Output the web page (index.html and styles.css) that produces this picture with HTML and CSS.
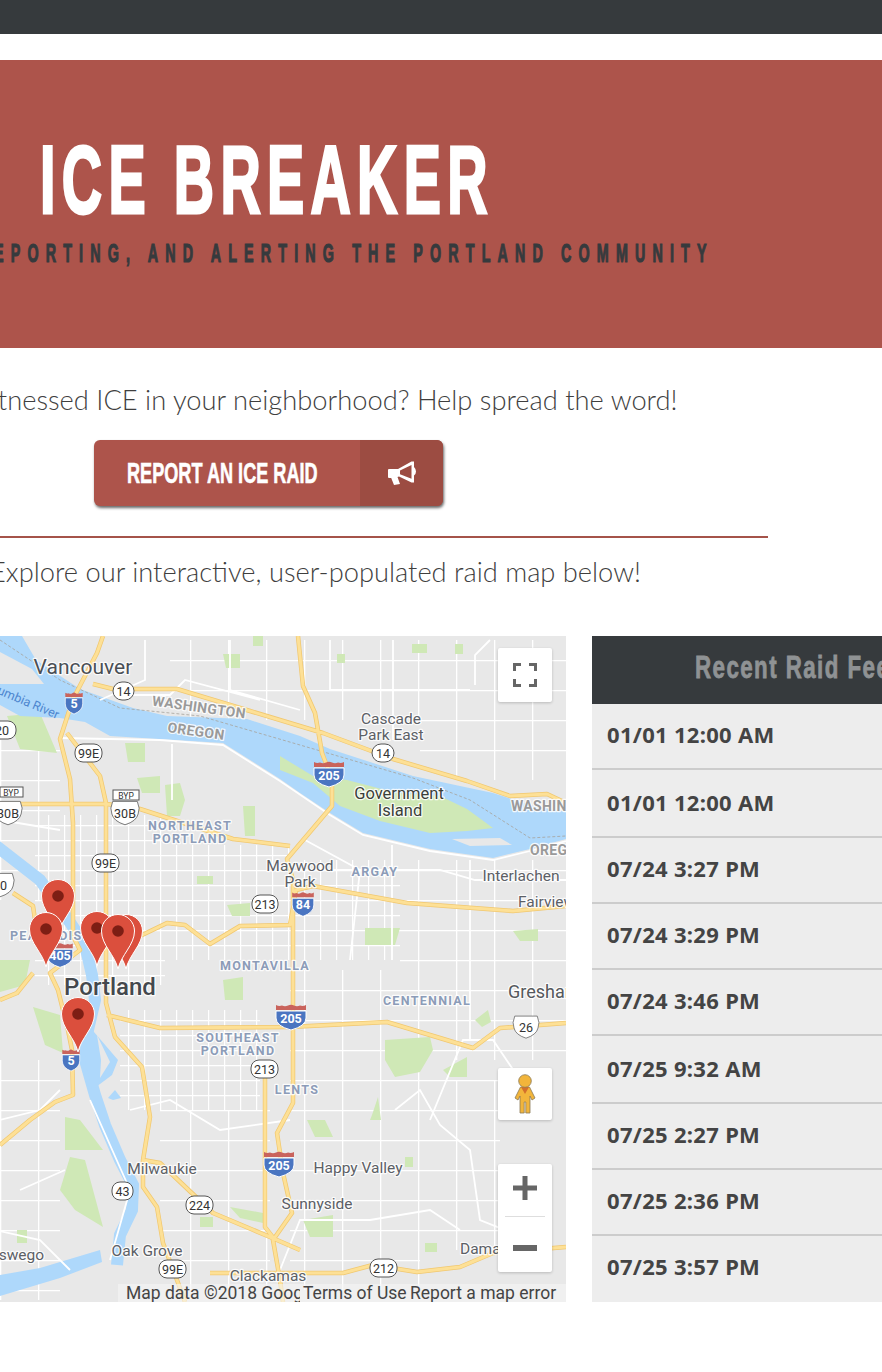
FILE: index.html
```html
<!DOCTYPE html>
<html>
<head>
    <title>Ice Breaker</title>
    <link rel="stylesheet" href="styles.css">
</head>
<body>
    <div class="topbar"></div>

    <header class="hero">
        <h1 class="hero-title"><span>ICE BREAKER</span></h1>
        <div class="hero-sub"><span>TRACKING, REPORTING, AND ALERTING THE PORTLAND COMMUNITY</span></div>
    </header>

    <p class="lede lede-first">Witnessed ICE in your neighborhood? Help spread the word!</p>

    <a class="report" href="#">
        <span class="report-label"><span>REPORT AN ICE RAID</span></span>
        <span class="report-icon">
            <svg width="30" height="26" viewBox="0 0 30 26">
                <path fill="#fff" fill-rule="evenodd" d="M1 10Q1 9 2 9L11 9 24.5 1.5 27 1.5 27 7Q29 9 29 11.5 29 14 27 15.5L27 22.5 24.5 22.5 12 16.5 10.5 17 13 24 7 25 4.2 18 2 18Q1 18 1 17ZM13 10.5L24.5 5 24.5 18.8 13 14.3Z"/>
            </svg>
        </span>
    </a>

    <hr class="rule">

    <p class="lede lede-second">Explore our interactive, user-populated raid map below!</p>

    <section class="dash">
        <div class="map">
            <svg class="map-art" width="566" height="666" viewBox="0 636 566 666">
                <defs>
                    <pattern id="blocks" width="16" height="15" patternUnits="userSpaceOnUse">
                        <path d="M0 .5H16M.5 0V15" stroke="#fff" stroke-width="1.4" fill="none"/>
                    </pattern>
                    <pattern id="bigblocks" width="38" height="30" patternUnits="userSpaceOnUse">
                        <path d="M0 .5H38M.5 0V30" stroke="#fff" stroke-width="1.6" fill="none"/>
                    </pattern>
                    <g id="pin">
                        <path d="M0 38C-3 24-16.500 14-16.500 0A16.500 16.500 0 0 1 16.500 0C16.500 14 3 24 0 38Z" fill="#db4f3d" stroke="#fff" stroke-width="1"/>
                        <circle r="5.800" fill="#7d1e14"/>
                    </g>
                    <g id="ishield">
                        <path d="M-15 -6H15V1Q15 9 0 13Q-15 9 -15 1Z" fill="#4a75c1" stroke="#fff" stroke-width="1"/>
                        <path d="M-15 -7V-12Q-12 -10.500 -9 -11.500Q-6 -10 -3 -11.500Q0 -13 3 -11.500Q6 -10 9 -11.500Q12 -10.500 15 -12V-7Z" fill="#c9635c"/>
                    </g>
                    <g id="ushield">
                        <path d="M-15 -14H15Q19 -6 16 0Q14 8 0 12Q-14 8 -16 0Q-19 -6 -15 -14Z" fill="#fff" stroke="#666" stroke-width="1"/>
                    </g>
                    <path id="hwys" d="M103 636L97 653 73 699 60 739 70 779 73 823V936L80 950 50 973 58 990 68 1030 72 1050 73 1095 55 1102 30 1120 0 1145M67 733L100 776 106 803V1003L115 1037 142 1067 150 1117 143 1160V1187L157 1207 163 1243 177 1280 185 1302M93 684L113 689H177L250 711 323 733 393 759 467 781 510 796 547 794 566 803M298 636L303 686 315 713 322 753 332 779V806L287 859 293 880V1103L277 1133 283 1173 292 1213 273 1240 280 1280 283 1302M140 936L167 923 185 925 210 944 240 926 290 925 296 890 313 886 407 903 513 911 566 906M107 1015L160 1028 290 1027 387 1022 473 1048 500 1028 566 1023M265 1063V1227L275 1240M143 1160L160 1163 213 1213 270 1237 300 1250M210 1273H343L373 1265 417 1272 460 1267 493 1253 566 1247M0 804H107L140 809 233 839 290 846M13 893L33 906 35 920M0 1000L17 993 33 973"/>
                </defs>

                <rect x="0" y="636" width="566" height="666" fill="#e8e8e8"/>

                <!-- neighbourhood street grids -->
                <path fill="url(#blocks)" d="M35 815H165V985H35ZM165 845H290V960H165ZM120 1010H260V1110H120ZM290 860H400V960H290Z"/>
                <path fill="url(#bigblocks)" d="M0 740H60V900H0ZM170 640H480V720H170ZM400 860H566V1010H400ZM160 1110H270V1290H160ZM290 1030H420V1290H290ZM0 1060H60V1300H0ZM420 640H566V780H420ZM290 970H566V1060H290ZM420 1080H500V1250H420Z"/>

                <!-- parks -->
                <path fill="#cfe8b6" d="M7 716L40 713 57 753 20 749ZM125 743H145V762H128ZM137 778L160 776V793H142ZM165 785L180 783 185 800 180 816H167ZM223 654H240V668H226ZM243 806H255V836H245ZM197 876H213V884H197ZM227 905L250 903V916H232ZM253 636H263V646H253ZM412 644H427V653H412ZM455 644H463V654H455ZM337 654H345V663H337ZM365 928H400L395 945H365ZM513 931L538 929V941H520ZM33 1007L60 1015 63 1053 45 1045ZM0 960H30L25 985 0 992ZM65 1117L80 1120 103 1150H65ZM70 1157L85 1160 103 1227 75 1210 60 1190ZM223 980L243 977V1000H225ZM230 1207L263 1213V1223L240 1218ZM200 1217H213V1227H200ZM17 1230H27V1243H17ZM385 1040L430 1037 433 1050 420 1072 395 1077 385 1060ZM443 1070L467 1057V1077H450ZM475 1020L488 1010 491 1022 482 1027ZM372 1115L378 1097 381 1120 370 1120ZM307 1120H325L333 1137H315ZM303 1220L333 1215V1237H310ZM425 1243H437V1252H425ZM405 1157H413V1167H405Z"/>

                <!-- water -->
                <path fill="#aed8fb" d="M0 636H22L36 660 80 689 133 708 167 716 247 719 300 736 330 749 413 776 493 793 533 806 566 812V839L530 849 493 858 430 849 363 833 330 813 300 793 280 779 223 743 110 736 85 722 60 718 20 716 0 705Z"/>
                <path fill="#e8e8e8" d="M0 652L32 669 44 684H0Z"/>
                <path fill="#cfe8b6" d="M280 756L313 776 347 780 397 793 440 796 467 809 493 828 467 831 430 833 380 821 340 806 313 783 280 770Z"/>
                <path fill="#e8e8e8" d="M452 839L500 838 512 845 470 846Z"/>
                <path d="M-5 845L40 880 65 915 85 945 92 975 95 1000 88 1030 85 1060 95 1095 105 1125 120 1160 133 1185 132 1210 120 1235 117 1265" fill="none" stroke="#aed8fb" stroke-width="12"/>
                <path fill="#aed8fb" d="M88 1025L118 1060 112 1075 92 1090 85 1060ZM115 1090L121 1098 113 1100 108 1098ZM0 1275L40 1268 100 1250 102 1262 60 1278 20 1290 0 1296Z"/>
                <path fill="#e8e8e8" d="M97 1035L110 1062 100 1078 101 1060Z"/>
                <path d="M0 640L60 680 120 708 200 716 300 745 413 778 470 800 530 838 566 836" fill="none" stroke="#a6a29a" stroke-width=".8" stroke-dasharray="3 2"/>

                <!-- arterials -->
                <g class="roads-minor">
                    <path d="M60 738L160 740 223 745 280 781 330 815 363 835 430 851 493 860 530 851 566 841M130 695H170L185 680 260 700M172 744V800M100 700L145 680V640M230 640V690L300 710M300 870L440 870 475 880 566 880M393 640V740M330 640V690H470M475 685V655L490 640M305 840L360 870 350 960M392 845V960M470 860V1040M0 820L60 830M90 1100L130 1190 110 1260M20 1190L65 1170M130 1110L170 1100 220 1130 290 1120M395 1110L420 1090 440 1125 470 1150 480 1220 530 1240M430 1120L463 1040 493 1040 520 1080M280 1270L300 1220 370 1220 430 1210 460 1230M0 1120L40 1110 60 1090M-5 1230L40 1240 70 1270"/>
                </g>

                <!-- highways -->
                <use href="#hwys" class="hwy-edge"/>
                <use href="#hwys" class="hwy"/>

                <!-- place names -->
                <text class="label big" x="83" y="674">Vancouver</text>
                <text class="label city" x="110" y="995">Portland</text>
                <text class="label state" transform="rotate(8 199 707)" x="199" y="712">WASHINGTON</text>
                <text class="label state" transform="rotate(8 196 731)" x="196" y="736">OREGON</text>
                <text class="label town" x="391" y="724">Cascade</text>
                <text class="label town" x="391" y="740">Park East</text>
                <text class="label island" x="399" y="799">Government</text>
                <text class="label island" x="400" y="816">Island</text>
                <text class="label hood" x="190" y="830">NORTHEAST</text>
                <text class="label hood" x="190" y="843">PORTLAND</text>
                <text class="label town" x="300" y="871">Maywood</text>
                <text class="label town" x="300" y="887">Park</text>
                <text class="label hood" x="375" y="876">ARGAY</text>
                <text class="label town" x="521" y="881">Interlachen</text>
                <text class="label town start" x="518" y="907">Fairview</text>
                <text class="label state start" x="511" y="811">WASHINGTON</text>
                <text class="label state start" x="530" y="855">OREGON</text>
                <text class="label hood start" x="10" y="940">PEARL DISTRICT</text>
                <text class="label hood" x="265" y="970">MONTAVILLA</text>
                <text class="label hood" x="427" y="1005">CENTENNIAL</text>
                <text class="label town start big-town" x="508" y="998">Gresham</text>
                <text class="label hood" x="238" y="1042">SOUTHEAST</text>
                <text class="label hood" x="238" y="1055">PORTLAND</text>
                <text class="label hood" x="297" y="1094">LENTS</text>
                <text class="label town" x="162" y="1174">Milwaukie</text>
                <text class="label town" x="358" y="1173">Happy Valley</text>
                <text class="label town" x="317" y="1209">Sunnyside</text>
                <text class="label town" x="147" y="1256">Oak Grove</text>
                <text class="label town" x="16" y="1260">Oswego</text>
                <text class="label town" x="268" y="1281">Clackamas</text>
                <text class="label town start" x="460" y="1254">Damascus</text>
                <text class="label water" transform="rotate(23 20 699)" x="20" y="703">Columbia River</text>

                <!-- route shields -->
                <g class="shields">
                    <use href="#ishield" transform="translate(74 703) scale(.58 .85)"/><text class="ilabel" x="74" y="708">5</text>
                    <use href="#ishield" transform="translate(71 1060) scale(.58 .85)"/><text class="ilabel" x="71" y="1065">5</text>
                    <use href="#ishield" transform="translate(60 955) scale(.85 .95)"/><text class="ilabel" x="60" y="960">405</text>
                    <use href="#ishield" x="329" y="774"/><text class="ilabel" x="329" y="780">205</text>
                    <use href="#ishield" x="291" y="1017"/><text class="ilabel" x="291" y="1023">205</text>
                    <use href="#ishield" x="279" y="1164"/><text class="ilabel" x="279" y="1170">205</text>
                    <use href="#ishield" transform="translate(303 904) scale(.72 .95)"/><text class="ilabel" x="303" y="909">84</text>

                    <rect class="plate" x="113" y="682" width="21" height="18" rx="9"/><text class="rlabel" x="123.500" y="695.500">14</text>
                    <rect class="plate" x="372" y="744" width="22" height="18" rx="9"/><text class="rlabel" x="383" y="757.500">14</text>
                    <rect class="plate" x="-12" y="721" width="28" height="18" rx="8"/><text class="rlabel" x="2" y="735">20</text>
                    <rect class="plate" x="75" y="744" width="27" height="18" rx="8"/><text class="rlabel" x="88.500" y="757.500">99E</text>
                    <rect class="plate" x="92" y="854" width="27" height="18" rx="8"/><text class="rlabel" x="105.500" y="867.500">99E</text>
                    <rect class="plate" x="252" y="895" width="26" height="18" rx="8"/><text class="rlabel" x="265" y="908.500">213</text>
                    <rect class="plate" x="251" y="1060" width="27" height="18" rx="8"/><text class="rlabel" x="264.500" y="1073.500">213</text>
                    <rect class="plate" x="112" y="1182" width="21" height="18" rx="8"/><text class="rlabel" x="122.500" y="1195.500">43</text>
                    <rect class="plate" x="186" y="1196" width="27" height="18" rx="8"/><text class="rlabel" x="199.500" y="1209.500">224</text>
                    <rect class="plate" x="159" y="1260" width="27" height="18" rx="8"/><text class="rlabel" x="172.500" y="1273.500">99E</text>
                    <rect class="plate" x="370" y="1259" width="27" height="18" rx="8"/><text class="rlabel" x="383.500" y="1272.500">212</text>

                    <use href="#ushield" transform="translate(526 1028) scale(.75 .85)"/><text class="rlabel" x="526" y="1032">26</text>
                    <use href="#ushield" transform="translate(125 814) scale(.82 .9)"/><text class="rlabel" x="125" y="818">30B</text>
                    <use href="#ushield" transform="translate(8 814) scale(.82 .9)"/><text class="rlabel" x="8" y="818">30B</text>
                    <use href="#ushield" transform="translate(0 886) scale(.82 .9)"/><text class="rlabel" x="0" y="890">30</text>
                    <rect class="plate byp" x="113" y="790" width="26" height="10"/><text class="bytext" x="126" y="798.500">BYP</text>
                    <rect class="plate byp" x="0" y="787" width="23" height="10"/><text class="bytext" x="11" y="795.500">BYP</text>
                </g>

                <!-- raid markers -->
                <use href="#pin" x="58" y="896"/>
                <use href="#pin" x="46" y="929"/>
                <use href="#pin" x="126" y="931"/>
                <use href="#pin" x="97" y="928"/>
                <use href="#pin" x="118" y="931"/>
                <use href="#pin" x="78" y="1014"/>
            </svg>

            <div class="map-footer">
                <span class="foot-data">Map data ©2018 Google</span>
                <span class="foot-terms">Terms of Use</span>
                <span class="foot-report">Report a map error</span>
            </div>

            <button class="ctl ctl-full">
                <svg width="24" height="24" viewBox="0 0 24 24"><path fill="none" stroke="#666" stroke-width="3" d="M1.500 8V1.500H8M16 1.500H22.500V8M22.500 16V22.500H16M8 22.500H1.500V16"/></svg>
            </button>
            <button class="ctl ctl-peg">
                <svg width="24" height="42" viewBox="0 0 24 42">
                    <path d="M7.500 14H16.500L22 25 19 27 17 23V40H12.800V29H11.200V40H7V23L5 27 2 25Z" fill="#f2b53b" stroke="#8b7a55" stroke-width=".8"/>
                    <path d="M8 14H16L12 21Z" fill="#d3702c"/>
                    <circle cx="12" cy="8" r="6.300" fill="#f2b53b" stroke="#8b7a55" stroke-width=".8"/>
                </svg>
            </button>
            <div class="ctl ctl-zoom">
                <span class="zoom-btn zoom-in"><svg width="24" height="24" viewBox="0 0 24 24"><path fill="#666" d="M9.500 0H14.500V9.500H24V14.500H14.500V24H9.500V14.500H0V9.500H9.500Z"/></svg></span>
                <span class="zoom-line"></span>
                <span class="zoom-btn zoom-out"><svg width="24" height="6" viewBox="0 0 24 6"><rect width="24" height="6" fill="#666"/></svg></span>
            </div>
        </div>

        <aside class="feed">
            <div class="feed-head"><span>Recent Raid Feed</span></div>
            <div class="feed-row">01/01 12:00 AM</div>
            <div class="feed-row feed-row-tall">01/01 12:00 AM</div>
            <div class="feed-row">07/24 3:27 PM</div>
            <div class="feed-row">07/24 3:29 PM</div>
            <div class="feed-row">07/24 3:46 PM</div>
            <div class="feed-row feed-row-tall">07/25 9:32 AM</div>
            <div class="feed-row">07/25 2:27 PM</div>
            <div class="feed-row">07/25 2:36 PM</div>
            <div class="feed-row">07/25 3:57 PM</div>
        </aside>
    </section>
</body>
</html>
```

FILE: styles.css
```css
html, body {
    margin: 0;
    padding: 0;
    overflow: hidden;
    height: 1372px;
    background: #fff;
}
body {
    font-family: Lato, "Open Sans", sans-serif;
    color: #333;
}

.topbar {
    height: 34px;
    background: #363a3d;
}

.hero {
    margin-top: 26px;
    height: 288px;
    background: #ad544b;
    overflow: hidden;
}
.hero-title {
    margin: 70px 0 0 40px;
    font: 700 97px/100px "Liberation Sans", sans-serif;
    color: #fff;
    white-space: nowrap;
}
.hero-title span {
    display: inline-block;
    letter-spacing: 11px;
    transform: scaleX(.575);
    transform-origin: left;
    -webkit-text-stroke: 3px #fff;
}
.hero-sub {
    display: flex;
    justify-content: flex-end;
    width: 714px;
    margin-top: 8px;
    font: 700 26px/30px "Liberation Sans", sans-serif;
    color: #363a3d;
    white-space: nowrap;
}
.hero-sub span {
    display: inline-block;
    flex: none;
    letter-spacing: 13px;
    transform: scaleX(.55);
    transform-origin: right;
    -webkit-text-stroke: 1.2px #363a3d;
}

.lede {
    margin: 0;
    font-size: 27.300px;
    font-weight: 300;
    line-height: 36px;
    white-space: nowrap;
    color: #3f3f3f;
}
.lede-first {
    margin: 34px 0 0 -36px;
}
.lede-second {
    margin: 16px 0 0 -10px;
}

.report {
    display: flex;
    width: 349px;
    height: 66px;
    margin: 22px 0 0 94px;
    border-radius: 6px;
    overflow: hidden;
    background: #ad544b;
    box-shadow: 1px 2px 3px rgba(0, 0, 0, .6);
    text-decoration: none;
    color: #fff;
}
.report-label {
    flex: 1;
    min-width: 0;
    padding-left: 33px;
    font: 700 29px/66px "Liberation Sans", sans-serif;
    white-space: nowrap;
}
.report-label span {
    display: inline-block;
    transform: scaleX(.625);
    transform-origin: left;
    -webkit-text-stroke: .6px #fff;
}
.report-icon {
    display: flex;
    flex: none;
    align-items: center;
    justify-content: center;
    width: 83px;
    background: #9c4c42;
}

.rule {
    width: 768px;
    height: 2px;
    margin: 30px 0 0;
    border: 0;
    background: #a5534a;
}

.dash {
    display: flex;
    gap: 26px;
    margin-top: 46px;
}
.map {
    position: relative;
    flex: none;
    width: 566px;
    height: 666px;
    overflow: hidden;
}
.map-art {
    display: block;
}
.label {
    font-family: Roboto, sans-serif;
    font-size: 15.500px;
    text-anchor: middle;
    fill: #5c6066;
    stroke: #fff;
    stroke-width: 2.500px;
    stroke-opacity: .85;
    paint-order: stroke;
    stroke-linejoin: round;
}
.label.start { text-anchor: start; }
.label.big { font-size: 21px; fill: #4a4f55; }
.label.city { font-size: 24px; font-weight: 500; fill: #44484d; }
.label.big-town { font-size: 18px; fill: #55585c; }
.label.island { font-size: 16.500px; fill: #3b3f3a; }
.label.state { font-size: 14px; font-weight: 700; fill: #9a9a9a; letter-spacing: .3px; }
.label.hood { font-size: 12.500px; font-weight: 700; fill: #8c9cb8; letter-spacing: 1.300px; }
.label.water { font-size: 12.500px; fill: #4d86cf; stroke: none; }
.roads-minor path {
    fill: none;
    stroke: #fff;
    stroke-width: 1.800;
}
.hwy-edge {
    fill: none;
    stroke: #f1c870;
    stroke-width: 4.500;
    stroke-linejoin: round;
}
.hwy {
    fill: none;
    stroke: #fde096;
    stroke-width: 3;
    stroke-linejoin: round;
}
.plate {
    fill: #fff;
    stroke: #555;
    stroke-width: 1;
}
.rlabel, .ilabel, .bytext {
    font-family: Roboto, sans-serif;
    text-anchor: middle;
}
.rlabel { font-size: 12.500px; fill: #333; }
.ilabel { font-size: 12.500px; font-weight: 700; fill: #fff; }
.bytext { font-size: 8.500px; fill: #333; }

.map-footer {
    position: absolute;
    left: 118px;
    right: 0;
    bottom: 0;
    height: 18px;
    background: rgba(245, 245, 245, .6);
    font: 17.500px/18px Roboto, sans-serif;
    color: #444;
    white-space: nowrap;
}
.map-footer span {
    position: absolute;
    top: 0;
}
.foot-data { left: 8px; width: 174px; overflow: hidden; }
.foot-terms { left: 185px; }
.foot-report { left: 292px; }

.ctl {
    position: absolute;
    left: 498px;
    width: 54px;
    padding: 0;
    border: 0;
    border-radius: 2px;
    background: #fff;
    box-shadow: 0 1px 3px rgba(0, 0, 0, .2);
    display: flex;
    align-items: center;
    justify-content: center;
}
.ctl-full { top: 12px; height: 54px; }
.ctl-peg { top: 432px; height: 52px; }
.ctl-zoom {
    top: 528px;
    height: 108px;
    flex-direction: column;
    justify-content: flex-start;
}
.zoom-btn {
    display: flex;
    flex: none;
    align-items: center;
    justify-content: center;
    width: 100%;
}
.zoom-in {
    height: 48px;
    margin-bottom: 4px;
}
.zoom-out {
    height: 48px;
    margin-top: 7px;
}
.zoom-line {
    display: block;
    flex: none;
    width: 40px;
    height: 1px;
    background: #dedede;
}

.feed {
    flex: none;
    width: 400px;
    height: 666px;
    overflow: hidden;
    background: #ededed;
}
.feed-head {
    height: 68px;
    padding-left: 103px;
    background: #363a3d;
    font: 700 31px/64px "Liberation Sans", sans-serif;
    color: #8f9294;
    white-space: nowrap;
}
.feed-head span {
    display: inline-block;
    letter-spacing: 2px;
    transform: scaleX(.72);
    transform-origin: left;
    -webkit-text-stroke: .8px #8f9294;
}
.feed-row {
    box-sizing: border-box;
    height: 66px;
    padding-left: 15px;
    border-bottom: 2px solid #ccc;
    font-family: "Noto Sans", sans-serif;
    font-size: 22px;
    font-weight: 700;
    letter-spacing: .3px;
    line-height: 60px;
    color: #444;
}
.feed-row:last-child {
    border-bottom: 0;
}
.feed-row-tall {
    height: 68px;
    line-height: 64px;
}
```
